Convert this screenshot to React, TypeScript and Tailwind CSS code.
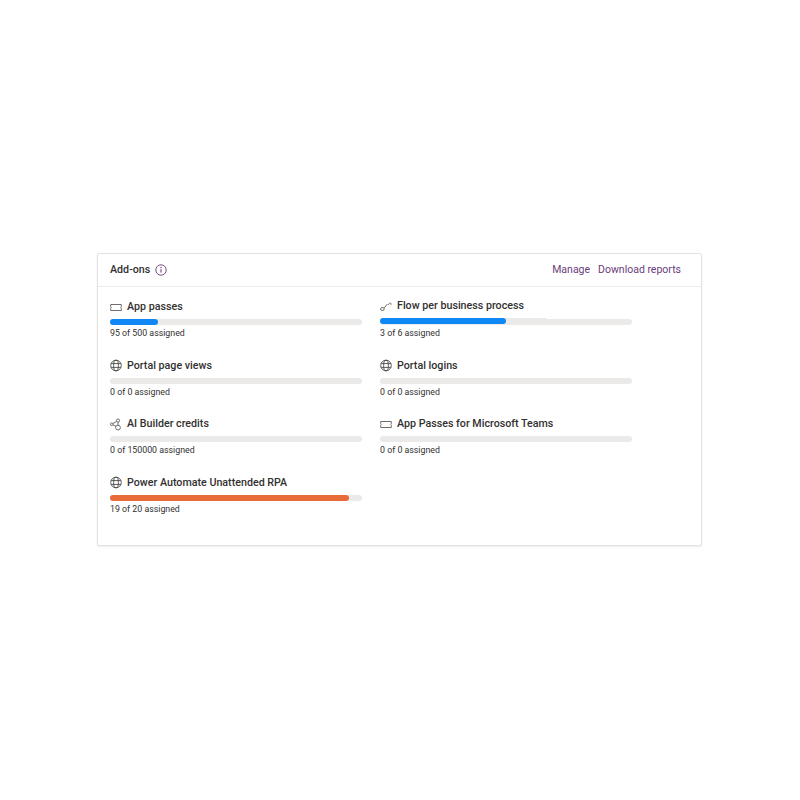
import type { ReactNode } from "react";

const font = "font-['Roboto','Noto_Sans',sans-serif]";

function PassIcon() {
  return (
    <svg width="12" height="13" viewBox="0 0 12 13" fill="none" stroke="#605e5c" strokeWidth="0.9" className="shrink-0">
      <path d="M0.7 3.5h10.6v2.2a1 1 0 0 0 0 1.6v2.2H0.7V7.3a1 1 0 0 0 0-1.6z" />
    </svg>
  );
}

function GlobeIcon() {
  return (
    <svg width="12" height="13" viewBox="0 0 12 13" fill="none" stroke="#4a4947" strokeWidth="0.9" className="shrink-0">
      <circle cx="6" cy="6.5" r="5.3" />
      <ellipse cx="6" cy="6.5" rx="2.4" ry="5.3" />
      <path d="M1.1 4.6h9.8M1.1 8.4h9.8" />
    </svg>
  );
}

function AiIcon() {
  return (
    <svg width="12" height="13" viewBox="0 0 12 13" fill="none" stroke="#605e5c" strokeWidth="0.9" className="shrink-0">
      <circle cx="1.8" cy="6.2" r="1.3" />
      <circle cx="8" cy="2.6" r="1.6" />
      <circle cx="8" cy="9.6" r="2.4" />
      <path d="M3 5.6 6.6 3.4M3 6.9 6 8.4M8 4.2v3" />
    </svg>
  );
}

function FlowIcon() {
  return (
    <svg width="12" height="13" viewBox="0 0 12 13" fill="none" stroke="#605e5c" strokeWidth="0.9" className="shrink-0">
      <rect x="0.6" y="7.6" width="3.6" height="2.8" rx="1.3" />
      <path d="M4.2 8 7.4 4" />
      <path d="M8.2 5 9.4 3.2h1.6v2" strokeWidth="0.7" />
    </svg>
  );
}

function InfoIcon() {
  return (
    <svg width="12" height="12" viewBox="0 0 12 12" fill="none" className="shrink-0">
      <circle cx="6" cy="6" r="5.2" stroke="#6b3f7a" strokeWidth="0.9" />
      <path d="M6 5.2v3.4" stroke="#742774" strokeWidth="1" />
      <circle cx="6" cy="3.5" r="0.65" fill="#742774" />
    </svg>
  );
}

type Item = {
  icon: ReactNode;
  title: string;
  sub: string;
  pct?: number;
  color?: string;
  quirk?: boolean;
};

function Row({ item }: { item: Item }) {
  return (
    <div className="w-[252px] h-[58.5px]">
      <div className={`flex items-center gap-[5px] h-[14px] ${item.quirk ? "pb-[2px]" : ""}`}>
        {item.icon}
        <span className="text-[10.7px] font-medium leading-[14px] text-[#323130] whitespace-nowrap">{item.title}</span>
      </div>
      <div className="relative mt-[5px] h-[6px] rounded-[3px] bg-[#ebeae8]">
        {item.quirk && (
          <div className="absolute left-0 -top-px h-[6px] w-[168px] rounded-[3px] bg-[#ebeae8]" />
        )}
        {item.pct !== undefined && (
          <div
            className={`absolute left-0 h-[6px] rounded-[3px] ${item.quirk ? "-top-px" : "top-0"}`}
            style={{ width: `${item.pct}%`, backgroundColor: item.color }}
          />
        )}
      </div>
      <div className="mt-[2px] text-[8.8px] leading-[12px] text-[#323130] whitespace-nowrap">{item.sub}</div>
    </div>
  );
}

const left: Item[] = [
  { icon: <PassIcon />, title: "App passes", sub: "95 of 500 assigned", pct: 19, color: "#0f87f5" },
  { icon: <GlobeIcon />, title: "Portal page views", sub: "0 of 0 assigned" },
  { icon: <AiIcon />, title: "AI Builder credits", sub: "0 of 150000 assigned" },
  { icon: <GlobeIcon />, title: "Power Automate Unattended RPA", sub: "19 of 20 assigned", pct: 95, color: "#e96b3a" },
];
const right: Item[] = [
  { icon: <FlowIcon />, title: "Flow per business process", sub: "3 of 6 assigned", pct: 50, color: "#0f87f5", quirk: true },
  { icon: <GlobeIcon />, title: "Portal logins", sub: "0 of 0 assigned" },
  { icon: <PassIcon />, title: "App Passes for Microsoft Teams", sub: "0 of 0 assigned" },
];

export default function App() {
  return (
    <div className={`w-[800px] h-[800px] bg-white pl-[97px] pt-[253px] ${font}`}>
      <div className="w-[605px] h-[293px] bg-white border border-[#e3e3e3] rounded-[2px] shadow-[0_1px_2px_rgba(0,0,0,0.08)]">
        <div className="h-[33px] border-b border-[#ececec] flex items-center justify-between pl-[12px] pr-[20px]">
          <div className="flex items-center gap-[5px]">
            <span className="text-[10.7px] font-medium text-[#323130]">Add-ons</span>
            <InfoIcon />
          </div>
          <div className="flex items-center gap-[8px] text-[10.5px] text-[#6a3d7c]">
            <span>Manage</span>
            <span>Download reports</span>
          </div>
        </div>
        <div className="flex pt-[13px] pl-[12px] gap-[18px]">
          <div>{left.map((i) => <Row key={i.title} item={i} />)}</div>
          <div>{right.map((i) => <Row key={i.title} item={i} />)}</div>
        </div>
      </div>
    </div>
  );
}
